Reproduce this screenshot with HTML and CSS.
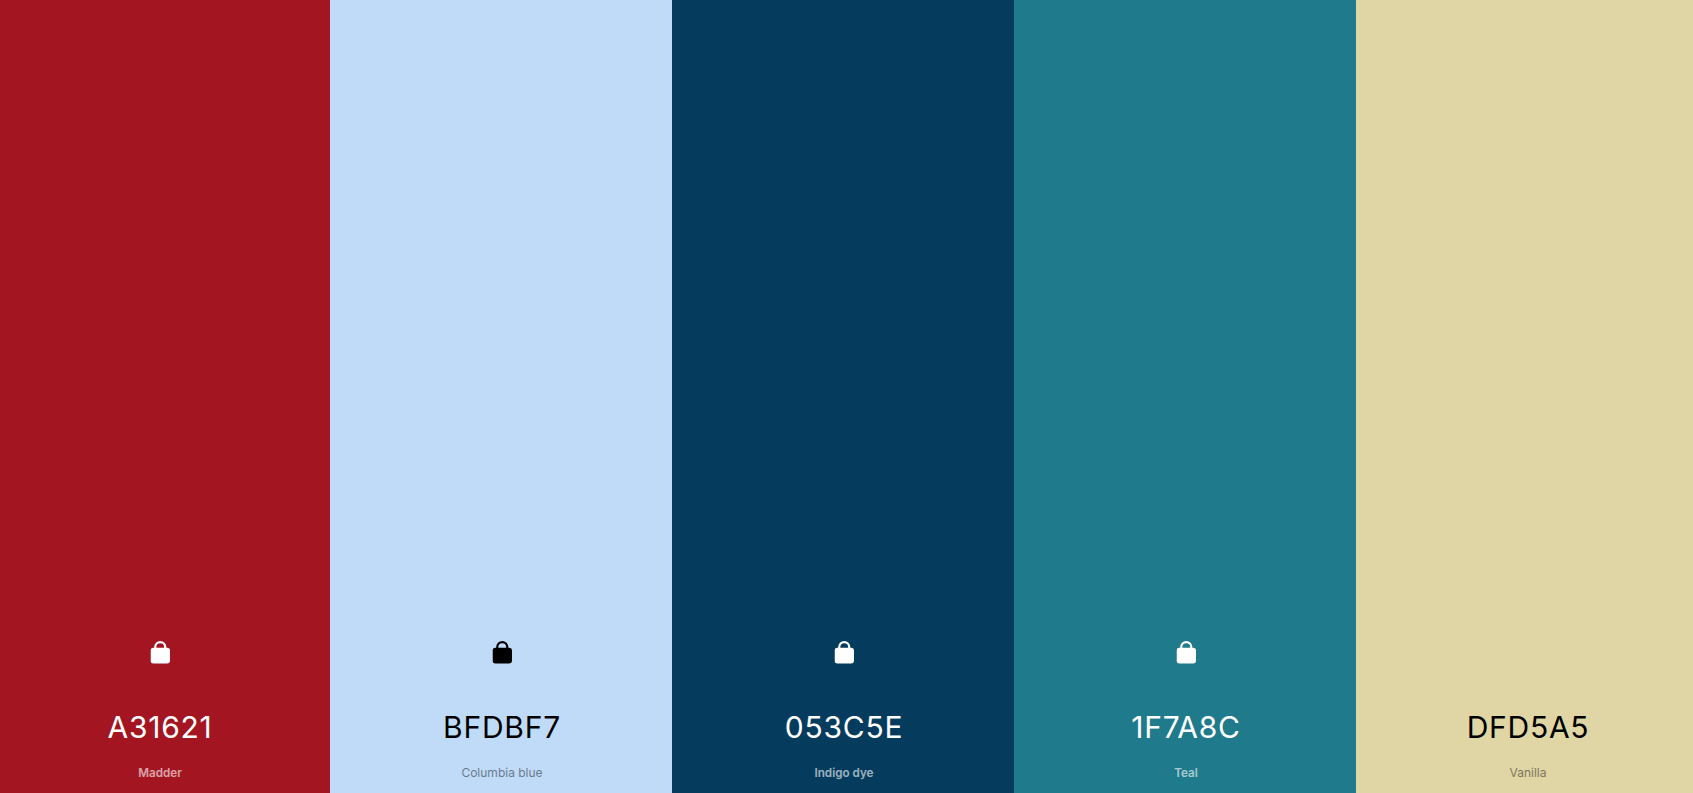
FILE: index.html
```html
<!DOCTYPE html>
<html lang="en">
<head>
<meta charset="utf-8">
<title>Palette</title>
<link rel="stylesheet" href="styles.css">
</head>
<body>
<main class="palette">
  <section class="swatch madder">
    <svg class="lock" viewBox="0 0 19.5 22.5" aria-hidden="true"><path d="M4.75 8V6.1a5 5 0 0 1 10 0V8" class="shackle"/><rect x="0" y="6.8" width="19.5" height="15.7" rx="3"/></svg>
    <div class="hex">A31621</div>
    <div class="name strong">Madder</div>
  </section>
  <section class="swatch columbia">
    <svg class="lock" viewBox="0 0 19.5 22.5" aria-hidden="true"><path d="M4.75 8V6.1a5 5 0 0 1 10 0V8" class="shackle"/><rect x="0" y="6.8" width="19.5" height="15.7" rx="3"/></svg>
    <div class="hex">BFDBF7</div>
    <div class="name">Columbia blue</div>
  </section>
  <section class="swatch indigo">
    <svg class="lock" viewBox="0 0 19.5 22.5" aria-hidden="true"><path d="M4.75 8V6.1a5 5 0 0 1 10 0V8" class="shackle"/><rect x="0" y="6.8" width="19.5" height="15.7" rx="3"/></svg>
    <div class="hex">053C5E</div>
    <div class="name strong">Indigo dye</div>
  </section>
  <section class="swatch teal">
    <svg class="lock" viewBox="0 0 19.5 22.5" aria-hidden="true"><path d="M4.75 8V6.1a5 5 0 0 1 10 0V8" class="shackle"/><rect x="0" y="6.8" width="19.5" height="15.7" rx="3"/></svg>
    <div class="hex">1F7A8C</div>
    <div class="name strong">Teal</div>
  </section>
  <section class="swatch vanilla">
    <div class="hex">DFD5A5</div>
    <div class="name">Vanilla</div>
  </section>
</main>
</body>
</html>
```
FILE: styles.css
```css
* { box-sizing: border-box; }
html, body { margin: 0; height: 100%; overflow: hidden; }
body { font-family: Inter, "Liberation Sans", sans-serif; }
.palette {
  display: grid;
  grid-template-columns: repeat(5, 342px);
  height: 793px;
  margin-left: -12px;
}
.swatch {
  display: flex;
  flex-direction: column;
  align-items: center;
  justify-content: flex-end;
  padding: 0 0 13px 2px;
}
.madder { background: #a31621; color: #fff; }
.columbia { background: #bfdbf7; color: #000; }
.indigo { background: #053c5e; color: #fff; }
.teal { background: #1f7a8c; color: #fff; }
.vanilla { background: #dfd5a5; color: #000; }
.lock {
  width: 19.5px;
  height: 22.5px;
  margin-bottom: 45.5px;
  fill: currentColor;
  transform: translateX(0.5px);
}
.lock .shackle { fill: none; stroke: currentColor; stroke-width: 2.2; }
.hex {
  font-size: 30px;
  line-height: 36px;
  letter-spacing: 0.75px;
  margin-bottom: 21px;
}
.name {
  font-size: 12px;
  line-height: 14px;
  opacity: 0.45;
}
.name.strong { font-size: 11.7px; font-weight: 600; opacity: 0.6; }
```
